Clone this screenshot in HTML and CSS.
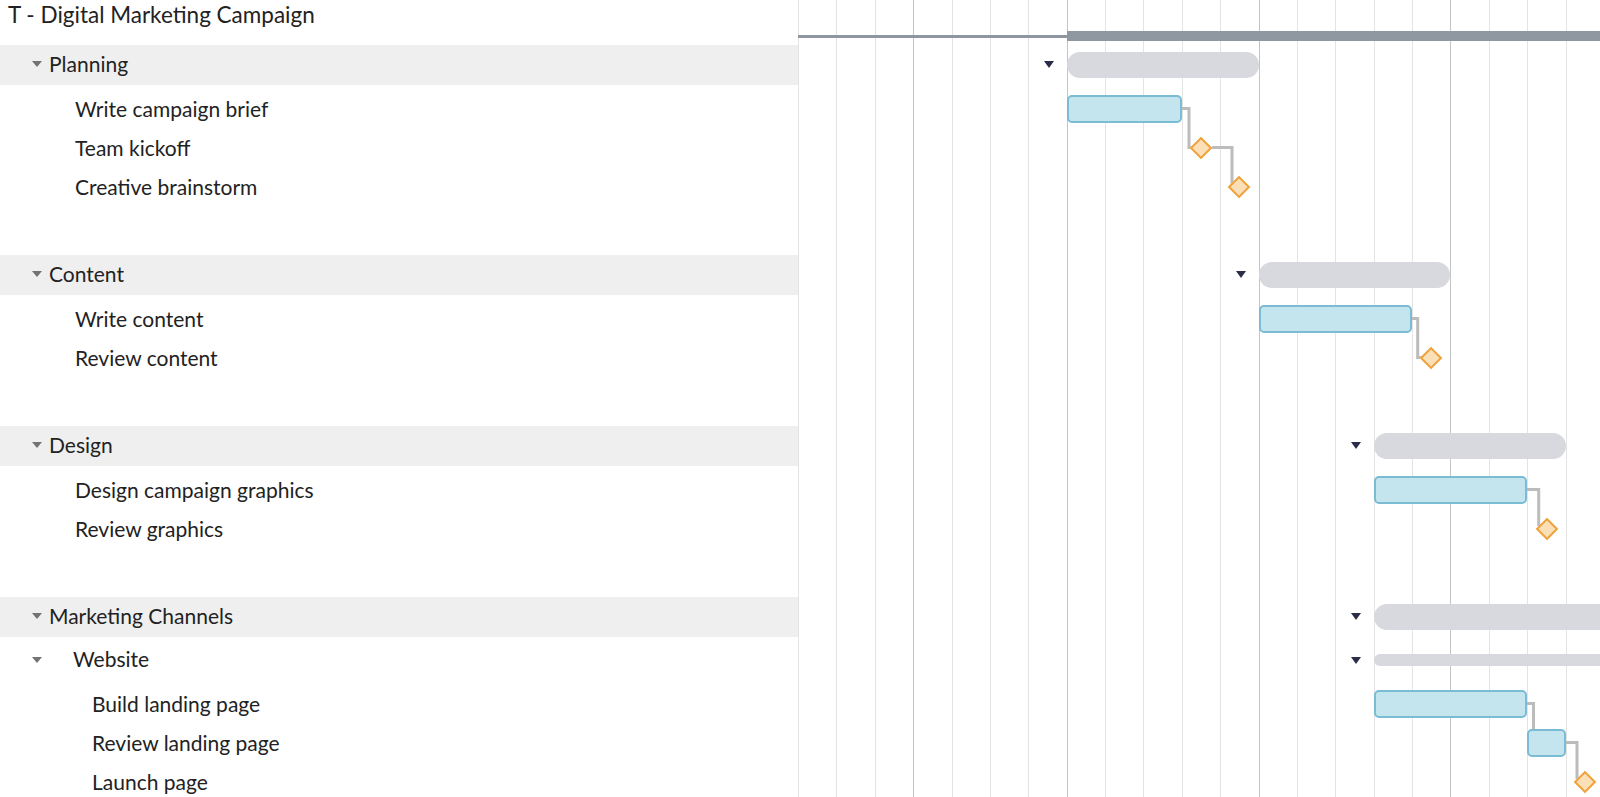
FILE: index.html
```html
<!DOCTYPE html>
<html lang="en">
<head>
  <meta charset="UTF-8" />
  <meta name="viewport" content="width=device-width, initial-scale=1" />
  <title>T - Digital Marketing Campaign</title>
  <link rel="stylesheet" href="styles.css">
</head>
<body>

<div class="gantt">

  <!-- Lista de tareas -->
  <div class="task-list">
    <div class="title">T - Digital Marketing Campaign</div>

    <div class="group"><span class="caret"></span>Planning</div>
    <div class="task">Write campaign brief</div>
    <div class="task">Team kickoff</div>
    <div class="task">Creative brainstorm</div>
    <div class="spacer"></div>

    <div class="group"><span class="caret"></span>Content</div>
    <div class="task">Write content</div>
    <div class="task">Review content</div>
    <div class="spacer"></div>

    <div class="group"><span class="caret"></span>Design</div>
    <div class="task">Design campaign graphics</div>
    <div class="task">Review graphics</div>
    <div class="spacer"></div>

    <div class="group"><span class="caret"></span>Marketing Channels</div>
    <div class="sub"><span class="caret"></span>Website</div>
    <div class="task deep">Build landing page</div>
    <div class="task deep">Review landing page</div>
    <div class="task deep">Launch page</div>
  </div>

  <!-- Diagrama -->
  <div class="chart">
    <div class="gridlines">
      <span></span><span></span><span></span><span class="week"></span>
      <span></span><span></span><span></span><span class="week"></span>
      <span></span><span></span><span></span><span></span><span class="week"></span>
      <span></span><span></span><span></span><span></span><span class="week"></span>
      <span></span><span></span><span></span>
    </div>

    <svg class="links" width="802" height="797">
      <path d="M384 108.5 H391 V147.5 H396" />
      <path d="M414 147.5 H434 V184" />
      <path d="M614 318.5 H619.7 V357.5 H625" />
      <path d="M729 489.5 H740.7 V526" />
      <path d="M729 703.5 H735.5 V735" />
      <path d="M767.5 742.5 H779 V779" />
    </svg>

    <div class="chart-head">
      <div class="axis" style="width: 268.7px"></div>
      <div class="project-bar"></div>
    </div>

    <div class="group">
      <span class="toggle" style="left: 246px"></span>
      <div class="summary" style="left: 268.7px; width: 191.9px"></div>
    </div>
    <div class="task">
      <div class="bar" style="left: 268.7px; width: 115.2px"></div>
    </div>
    <div class="task">
      <span class="milestone" style="left: 395px"></span>
    </div>
    <div class="task">
      <span class="milestone" style="left: 433.4px"></span>
    </div>
    <div class="spacer"></div>

    <div class="group">
      <span class="toggle" style="left: 438px"></span>
      <div class="summary" style="left: 460.6px; width: 191.9px"></div>
    </div>
    <div class="task">
      <div class="bar" style="left: 460.6px; width: 153.5px"></div>
    </div>
    <div class="task">
      <span class="milestone" style="left: 625.3px"></span>
    </div>
    <div class="spacer"></div>

    <div class="group">
      <span class="toggle" style="left: 553px"></span>
      <div class="summary" style="left: 575.8px; width: 191.9px"></div>
    </div>
    <div class="task">
      <div class="bar" style="left: 575.8px; width: 153.5px"></div>
    </div>
    <div class="task">
      <span class="milestone" style="left: 740.5px"></span>
    </div>
    <div class="spacer"></div>

    <div class="group">
      <span class="toggle" style="left: 553px"></span>
      <div class="summary" style="left: 575.8px; width: 300px"></div>
    </div>
    <div class="sub">
      <span class="toggle" style="left: 553px"></span>
      <div class="summary thin" style="left: 575.8px; width: 300px"></div>
    </div>
    <div class="task">
      <div class="bar" style="left: 575.8px; width: 153.5px"></div>
    </div>
    <div class="task">
      <div class="bar" style="left: 729.3px; width: 38.4px"></div>
    </div>
    <div class="task">
      <span class="milestone" style="left: 778.9px"></span>
    </div>
  </div>

</div>

</body>
</html>
```

FILE: styles.css
```css
body {
  margin: 0;
  background-color: white;
  overflow: hidden;
  color: #222222;
  font-family: Lato, "Open Sans", sans-serif;
  font-size: 21px;
}

.gantt {
  display: flex;
  height: 797px;
  overflow: hidden;
}

/* ---- lista izquierda ---- */
.task-list {
  flex: 0 0 798px;
}

.title {
  height: 45px;
  padding-left: 8px;
  font-size: 22.5px;
  line-height: 30px;
}

.task-list .group {
  height: 40px;
  margin-bottom: 4px;
  display: flex;
  align-items: center;
  padding: 0 0 4px 32px;
  box-sizing: border-box;
  background-color: #efefef;
}

.task-list .sub {
  height: 39px;
  margin-bottom: 4px;
  display: flex;
  align-items: center;
  padding: 0 0 4px 32px;
  box-sizing: border-box;
}

.task-list .task {
  height: 39px;
  display: flex;
  align-items: center;
  padding-left: 75px;
}

.task-list .task.deep {
  padding-left: 92px;
}

.spacer {
  height: 49px;
}

.caret {
  width: 0;
  height: 0;
  border-left: 5px solid transparent;
  border-right: 5px solid transparent;
  border-top: 6px solid #737373;
  margin: 2px 7px 0 0;
}

.task-list .sub .caret {
  margin-right: 31px;
}

/* ---- diagrama ---- */
.chart {
  flex: 1;
  position: relative;
  overflow: hidden;
}

.gridlines {
  position: absolute;
  top: 0;
  bottom: 0;
  left: 0;
  display: flex;
  z-index: 0;
}

.gridlines span {
  flex: 0 0 38.385px;
  box-sizing: border-box;
  border-left: 1px solid #e4e4e4;
}

.gridlines span.week {
  border-left-color: #c4c4c4;
}

.links {
  position: absolute;
  top: 0;
  left: 0;
  z-index: 1;
}

.links path {
  fill: none;
  stroke: #bcbcbc;
  stroke-width: 3;
}

.chart-head {
  height: 45px;
  display: flex;
  align-items: flex-start;
  position: relative;
  z-index: 2;
}

.axis {
  margin-top: 35px;
  height: 3px;
  background-color: #8e979f;
}

.project-bar {
  flex: 1;
  margin-top: 31px;
  height: 10px;
  background-color: #8f98a1;
}

.chart .group,
.chart .task,
.chart .sub {
  position: relative;
  z-index: 2;
}

.chart .group {
  height: 40px;
  margin-bottom: 4px;
}

.chart .sub {
  height: 39px;
  margin-bottom: 4px;
}

.chart .task {
  height: 39px;
}

.toggle {
  position: absolute;
  top: 16px;
  width: 0;
  height: 0;
  border-left: 5px solid transparent;
  border-right: 5px solid transparent;
  border-top: 7px solid #2b2c47;
}

.chart .sub .toggle {
  top: 16px;
}

.summary {
  position: absolute;
  top: 7px;
  height: 26px;
  border-radius: 13px;
  background-color: #d8d9de;
}

.summary.thin {
  top: 13px;
  height: 12px;
  border-radius: 6px;
}

.bar {
  position: absolute;
  top: 6px;
  height: 28px;
  box-sizing: border-box;
  border: 2px solid #7bbcd5;
  border-radius: 5px;
  background-color: #c5e5ee;
}

.milestone {
  position: absolute;
  top: 11.5px;
  width: 16px;
  height: 16px;
  box-sizing: border-box;
  border: 2px solid #f0a23c;
  background-color: #fbdfb7;
  transform: rotate(45deg);
}
```
